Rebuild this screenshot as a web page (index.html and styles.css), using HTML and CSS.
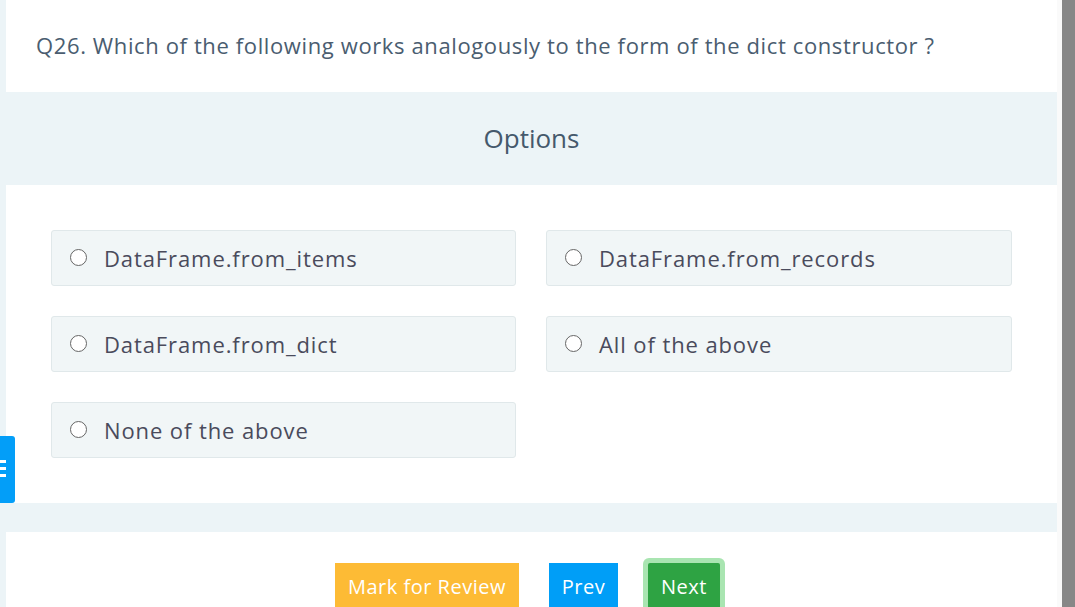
FILE: index.html
```html
<!DOCTYPE html>
<html>
<head>
<meta charset="utf-8">
<link rel="stylesheet" href="styles.css">
</head>
<body>
<div class="page">
  <div class="gutter"></div>
  <main class="card">
    <div class="question">Q26. Which of the following works analogously to the form of the dict constructor ?</div>
    <div class="options-head">Options</div>
    <div class="options">
      <label class="opt"><span class="radio"></span><span>DataFrame.from_items</span></label>
      <label class="opt"><span class="radio"></span><span>DataFrame.from_records</span></label>
      <label class="opt"><span class="radio"></span><span>DataFrame.from_dict</span></label>
      <label class="opt"><span class="radio"></span><span>All of the above</span></label>
      <label class="opt"><span class="radio"></span><span>None of the above</span></label>
    </div>
    <div class="band"></div>
    <div class="actions">
      <button class="btn btn-review">Mark for Review</button>
      <button class="btn btn-prev">Prev</button>
      <button class="btn btn-next">Next</button>
    </div>
  </main>
  <div class="track"></div>
  <div class="thumb"></div>
</div>
<div class="side-tab"><span></span><span></span><span></span></div>
</body>
</html>
```
FILE: styles.css
```css
html, body {
  margin: 0;
  padding: 0;
  height: 607px;
  overflow: hidden;
}
body {
  background: #ecf4f7;
  font-family: "Open Sans", Lato, sans-serif;
}
.page {
  display: flex;
  height: 607px;
}
.gutter {
  width: 6px;
  flex: none;
}
.card {
  width: 1051px;
  flex: none;
  background: #ffffff;
  display: flex;
  flex-direction: column;
}
.card > * {
  flex: none;
}
.track {
  width: 5px;
  flex: none;
  background: #fafafa;
}
.thumb {
  width: 13px;
  flex: none;
  background: #878787;
}
.question {
  height: 92px;
  box-sizing: border-box;
  padding: 31px 30px 0 30px;
  font-size: 22px;
  line-height: 28px;
  color: #4a5d70;
  letter-spacing: 0.62px;
}
.options-head {
  height: 93px;
  background: #ecf4f7;
  display: flex;
  align-items: center;
  justify-content: center;
  font-size: 26px;
  color: #45596c;
  padding-bottom: 2px;
  box-sizing: border-box;
}
.options {
  display: grid;
  grid-template-columns: 465px 466px;
  column-gap: 30px;
  row-gap: 30px;
  padding: 45px 45px;
}
.opt {
  height: 56px;
  box-sizing: border-box;
  background: #f1f6f7;
  border: 1px solid #e0e8ea;
  border-radius: 3px;
  display: flex;
  align-items: center;
  padding-left: 18px;
  padding-bottom: 1px;
  font-size: 22px;
  color: #4a4b5c;
  letter-spacing: 0.9px;
}
.radio {
  width: 15px;
  height: 15px;
  border: 1.5px solid #666;
  border-radius: 50%;
  background: #fff;
  margin-right: 17px;
  flex: none;
}
.band {
  height: 29px;
  background: #ecf4f7;
}
.actions {
  display: flex;
  justify-content: center;
  gap: 30px;
  padding-top: 31px;
  padding-right: 8px;
}
.btn {
  border: none;
  height: 48px;
  font-family: inherit;
  font-size: 20px;
  letter-spacing: 0.5px;
  color: #fff;
  padding: 0 0 2px;
  border-radius: 0;
  display: flex;
  align-items: center;
  justify-content: center;
}
.btn-review {
  background: #fdbb35;
  width: 184px;
}
.btn-prev {
  background: #009ef7;
  width: 69px;
}
.btn-next {
  background: #2ea343;
  width: 72px;
  border-radius: 2px;
  box-shadow: 0 0 0 5px #a9e5b1;
}
.side-tab {
  position: fixed;
  left: 0;
  top: 436px;
  width: 15px;
  height: 67px;
  background: #039ef8;
  border-radius: 0 3px 3px 0;
  display: flex;
  flex-direction: column;
  gap: 4px;
  padding-top: 24px;
  box-sizing: border-box;
}
.side-tab span {
  width: 6px;
  height: 3px;
  background: #fff;
}
```
